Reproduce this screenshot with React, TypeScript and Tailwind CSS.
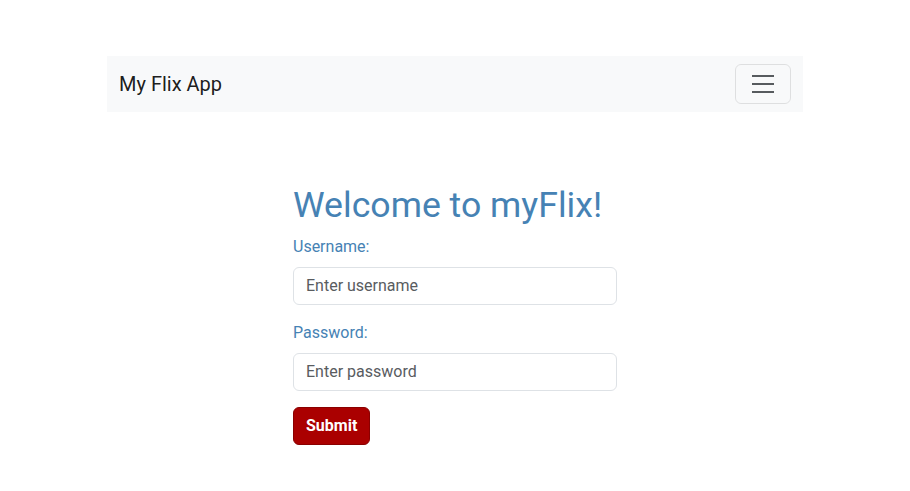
export default function App() {
  return (
    <div className="min-h-screen bg-white font-['Roboto',_'Liberation_Sans',_sans-serif] text-[#212529] pt-14">
      <div className="mx-auto w-[696px]">
        {/* Navbar */}
        <nav className="flex items-center justify-between bg-[#f8f9fa] px-3 py-2">
          <span className="text-[20px] leading-[30px] text-black/90">My Flix App</span>
          <button className="flex h-10 w-14 items-center justify-center rounded-md border border-black/10">
            <svg width="30" height="30" viewBox="0 0 30 30">
              <path
                d="M4 7h22M4 15h22M4 23h22"
                stroke="rgba(33,37,41,0.75)"
                strokeWidth="2"
                strokeLinecap="butt"
              />
            </svg>
          </button>
        </nav>

        {/* Login form */}
        <form className="mx-auto mt-[72px] w-[324px]">
          <h1 className="mb-2 text-[35.65px] leading-[1.2] font-normal text-[#4682b4]">
            Welcome to myFlix!
          </h1>
          <div className="mb-4">
            <label className="mb-2 block text-base leading-6 text-[#4682b4]">Username:</label>
            <input
              type="text"
              placeholder="Enter username"
              className="block h-[38px] w-full rounded-md border border-[#dee2e6] px-3 text-base placeholder:text-[#595c5f] outline-none"
            />
          </div>
          <div className="mb-4">
            <label className="mb-2 block text-base leading-6 text-[#4682b4]">Password:</label>
            <input
              type="password"
              placeholder="Enter password"
              className="block h-[38px] w-full rounded-md border border-[#dee2e6] px-3 text-base placeholder:text-[#595c5f] outline-none"
            />
          </div>
          <button
            type="submit"
            className="h-[38px] rounded-md border border-[#8a0000] bg-[#aa0000] px-3 text-base font-bold text-white"
          >
            Submit
          </button>
        </form>
      </div>
    </div>
  )
}
